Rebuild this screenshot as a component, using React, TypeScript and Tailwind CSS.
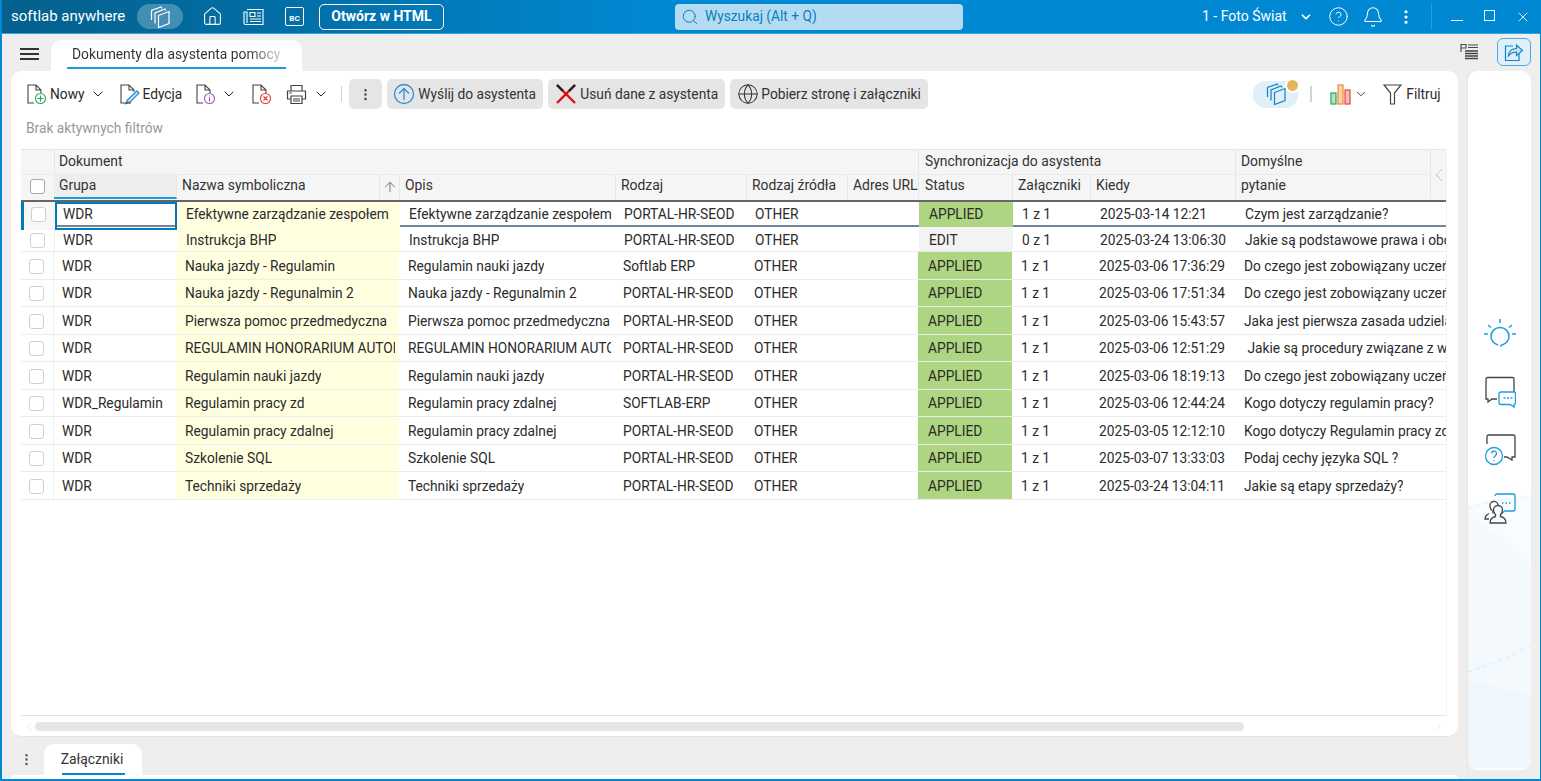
import React from "react";
import {
  ArrowUp,
  Bell,
  ChevronDown,
  ChevronLeft,
  ChevronRight,
  CircleHelp,
  EllipsisVertical,
  Globe,
  House,
  Search,
  X,
} from "lucide-react";

const gridCols =
  "grid grid-cols-[34px_122px_223px_216px_131px_101px_71px_94px_78px_145px_211px]";

type Row = {
  group: string;
  name: string;
  desc: string;
  kind: string;
  status: string;
  att: string;
  when: string;
  question: string;
};

const rows: Row[] = [
  { group: "WDR", name: "Instrukcja BHP", desc: "Instrukcja BHP", kind: "PORTAL-HR-SEOD", status: "EDIT", att: "0 z 1", when: "2025-03-24 13:06:30", question: "Jakie są podstawowe prawa i obowiązki" },
  { group: "WDR", name: "Nauka jazdy - Regulamin", desc: "Regulamin nauki jazdy", kind: "Softlab ERP", status: "APPLIED", att: "1 z 1", when: "2025-03-06 17:36:29", question: "Do czego jest zobowiązany uczeń kierowcy" },
  { group: "WDR", name: "Nauka jazdy - Regunalmin 2", desc: "Nauka jazdy - Regunalmin 2", kind: "PORTAL-HR-SEOD", status: "APPLIED", att: "1 z 1", when: "2025-03-06 17:51:34", question: "Do czego jest zobowiązany uczeń kierowcy" },
  { group: "WDR", name: "Pierwsza pomoc przedmedyczna", desc: "Pierwsza pomoc przedmedyczna", kind: "PORTAL-HR-SEOD", status: "APPLIED", att: "1 z 1", when: "2025-03-06 15:43:57", question: "Jaka jest pierwsza zasada udzielania" },
  { group: "WDR", name: "REGULAMIN HONORARIUM AUTORSKIEGO", desc: "REGULAMIN HONORARIUM AUTORSKIEGO", kind: "PORTAL-HR-SEOD", status: "APPLIED", att: "1 z 1", when: "2025-03-06 12:51:29", question: "\u00a0Jakie są procedury związane z wypłatą" },
  { group: "WDR", name: "Regulamin nauki jazdy", desc: "Regulamin nauki jazdy", kind: "PORTAL-HR-SEOD", status: "APPLIED", att: "1 z 1", when: "2025-03-06 18:19:13", question: "Do czego jest zobowiązany uczeń kierowcy" },
  { group: "WDR_Regulamin", name: "Regulamin pracy zd", desc: "Regulamin pracy zdalnej", kind: "SOFTLAB-ERP", status: "APPLIED", att: "1 z 1", when: "2025-03-06 12:44:24", question: "Kogo dotyczy regulamin pracy?" },
  { group: "WDR", name: "Regulamin pracy zdalnej", desc: "Regulamin pracy zdalnej", kind: "PORTAL-HR-SEOD", status: "APPLIED", att: "1 z 1", when: "2025-03-05 12:12:10", question: "Kogo dotyczy Regulamin pracy zdalnej" },
  { group: "WDR", name: "Szkolenie SQL", desc: "Szkolenie SQL", kind: "PORTAL-HR-SEOD", status: "APPLIED", att: "1 z 1", when: "2025-03-07 13:33:03", question: "Podaj cechy języka SQL ?" },
  { group: "WDR", name: "Techniki sprzedaży", desc: "Techniki sprzedaży", kind: "PORTAL-HR-SEOD", status: "APPLIED", att: "1 z 1", when: "2025-03-24 13:04:11", question: "Jakie są etapy sprzedaży?" },
];

// Page outline with a coloured round badge in the corner
const DocIcon = ({ badge, children }: { badge: string; children?: React.ReactNode }) => (
  <svg width="21" height="22" viewBox="0 0 21 22" fill="none">
    <path d="M8 20H2V2h8l5 5v3M10 2v5h5" stroke="#444" strokeWidth="1.1" />
    <circle cx="14.5" cy="15.5" r="5" stroke={badge} strokeWidth="1.1" fill="#fff" />
    {children}
  </svg>
);

const EditIcon = () => (
  <svg width="21" height="22" viewBox="0 0 21 22" fill="none">
    <path d="M6 20H2V2h8l5 5v2M10 2v5h5" stroke="#444" strokeWidth="1.1" />
    <path d="M18 8l2 2-9 9-4 1.5L8.500 17z" stroke="#2f8fd6" strokeWidth="1.400" fill="#d6ebfa" />
    <path d="M6 20h6" stroke="#444" strokeWidth="1.1" />
  </svg>
);

const PrinterIcon = () => (
  <svg width="21" height="21" viewBox="0 0 21 21" fill="none" stroke="#444" strokeWidth="1.2">
    <path d="M5 7V1.500h11V7" />
    <path d="M5 15H1.500V7h18v8H16" />
    <path d="M5 12h11v7.500H5zM7 15h7M7 17h7" />
    <path d="M3 9h3" stroke="#2f8fd6" />
  </svg>
);

// Three fanned out pages, only the front one is complete
const SyncIcon = ({ color }: { color: string }) => (
  <svg width="22" height="22" viewBox="0 0 22 22" fill="none" stroke={color} strokeWidth="1.200">
    <path d="M9.500 9.500l10.500-4v12l-10.500 4z" />
    <path d="M6 17.500V7L16 3l1 1.500" />
    <path d="M2.500 14V4.500L12 1l1 1.500" />
  </svg>
);

const NewsIcon = () => (
  <svg width="21" height="18" viewBox="0 0 21 18" fill="none" stroke="#fff" strokeWidth="1.100">
    <path d="M4 1.500h16v15H2.500A1.500 1.500 0 0 1 1 15V4h3v11" />
    <path d="M7 4.500h5v4H7zM14 5h4M14 8h4M7 11h11M7 13.500h11" />
  </svg>
);

const SendIcon = () => (
  <svg width="22" height="22" viewBox="0 0 22 22" fill="none" stroke="#2f8fd6" strokeWidth="1.300">
    <circle cx="11" cy="11" r="9.500" />
    <path d="M11 17V5.500M6 10.500l5-5 5 5" />
  </svg>
);

const CrossIcon = () => (
  <svg width="22" height="22" viewBox="0 0 22 22" fill="none" strokeWidth="2.400">
    <path d="M2 2l18 18" stroke="#d31212" />
    <path d="M20 2L2 20" stroke="#e00f0f" />
    <path d="M2 2l6 6M20 2l-6 6" stroke="#222" />
  </svg>
);

const ChartIcon = () => (
  <svg width="21" height="21" viewBox="0 0 21 21" fill="none" strokeWidth="1.200">
    <rect x="1" y="9" width="5" height="11" stroke="#25a65a" fill="#b7e2c6" />
    <rect x="8" y="1" width="5" height="19" stroke="#ee8a2c" fill="#fbd3ad" />
    <rect x="15" y="6" width="5" height="14" stroke="#e6443f" fill="#f8bcb9" />
  </svg>
);

const FilterIcon = () => (
  <svg width="19" height="21" viewBox="0 0 19 21" fill="none" stroke="#444" strokeWidth="1.200">
    <path d="M1 1h17l-6.500 8v11h-4V9z" />
  </svg>
);

const FlagListIcon = () => (
  <svg width="19" height="18" viewBox="0 0 19 18" fill="none" stroke="#444" strokeWidth="1.100">
    <path d="M1 1v8M1 1.500h5v3.500H1M8 2h10M8 4.500h10" />
    <path d="M5 8h13M5 10.500h13M5 13h13M5 15.500h13" strokeWidth="1.300" />
  </svg>
);

const ShareIcon = () => (
  <svg width="20" height="20" viewBox="0 0 20 20" fill="none" stroke="#1183c4" strokeWidth="1.200">
    <path d="M9 4H1.500v14.500H15V12" />
    <path d="M4.500 14c.5-5 4-7.500 8-7.500V3l6 5.500-6 5v-3.500c-3.500 0-6 1.500-8 4z" fill="#cfe6f5" />
  </svg>
);

const BulbIcon = () => (
  <svg width="32" height="32" viewBox="0 0 32 32" fill="none" stroke="#1c9be0" strokeWidth="1.500">
    <path d="M14 27c-4-1.500-7-4-7-8.500a9 9 0 0 1 18 0c0 4.500-3 7-7 8.500l-2 1.500" />
    <path d="M16 1v4M4 7l3 2.500M28 7l-3 2.500M0 16h4M28 16h4" />
  </svg>
);

const ChatIcon = () => (
  <svg width="32" height="32" viewBox="0 0 32 32" fill="none" strokeWidth="1.300">
    <path d="M13 23H8l-4 3v-3H2V3a1.500 1.500 0 0 1 1.500-1.500h25A1.500 1.500 0 0 1 30 3v13" stroke="#444" />
    <path d="M15 18a2 2 0 0 1 2-2h13a1.500 1.500 0 0 1 1.500 1.500V27a1.500 1.500 0 0 1-1.500 1.500v2.500l-4-2.500h-9a2 2 0 0 1-2-2z" stroke="#1c9be0" fill="#fff" />
    <path d="M19.500 22h2M23 22h2M26.500 22h2" stroke="#1c9be0" />
  </svg>
);

const HelpChatIcon = () => (
  <svg width="32" height="32" viewBox="0 0 32 32" fill="none" strokeWidth="1.300">
    <path d="M3 10V2.500A1.500 1.500 0 0 1 4.500 1h25A1.500 1.500 0 0 1 31 2.500V23h-3v3l-5-3h-3" stroke="#444" />
    <circle cx="10" cy="22" r="8.500" stroke="#1c9be0" fill="#fff" />
    <path d="M7.500 19.500a2.500 2.500 0 1 1 4 2c-1 .8-1.500 1.300-1.500 2.500M10 26v1" stroke="#1c9be0" />
  </svg>
);

const UsersChatIcon = () => (
  <svg width="32" height="32" viewBox="0 0 32 32" fill="none" strokeWidth="1.300">
    <path d="M11 4a2 2 0 0 1 2-2h16a2 2 0 0 1 2 2v13a2 2 0 0 1-2 2h-8l-4 3v-3" stroke="#1c9be0" />
    <path d="M18 11h1.500M21.500 11h1.500M25 11h1.500" stroke="#1c9be0" />
    <path d="M9 21.500V19c-2-1-3-3-3-5a4 4 0 0 1 8-1M5 27H1c0-3.500 2-4.500 4-5.500" stroke="#444" />
    <path d="M6 31c0-4 1.500-5.500 5.500-6.500v-2c-1.500-1-2-3-2-4.500a4.500 4.500 0 0 1 9 0c0 1.500-.5 3.500-2 4.500v2c4 1 5.500 2.500 5.500 6.500z" stroke="#444" fill="#f8fbfd" />
  </svg>
);

const Checkbox = () => (
  <span className="block h-[15px] w-[15px] rounded-[3px] border border-[#d0d0d0] bg-white" />
);

const ToolButton = ({ icon, label, className }: { icon: React.ReactNode; label: string; className: string }) => (
  <button className={`flex h-[30px] items-center rounded-[5px] bg-[#e5e5e5] text-[13.75px] text-[#333] ${className}`}>
    {icon}
    <span>{label}</span>
  </button>
);

const HeadCell = ({ className, children }: { className?: string; children: React.ReactNode }) => (
  <div className={`flex items-center overflow-hidden whitespace-nowrap border-r border-[#e6e6e6] text-[13.9px] text-[#333] ${className ?? "pl-[5px] pb-[4px]"}`}>
    {children}
  </div>
);

const BodyCell = ({ className, flush, children }: { className: string; flush?: boolean; children: React.ReactNode }) => (
  <div className={`flex items-center ${flush ? "" : "pr-[4px]"} ${className}`}>
    <span className="block overflow-hidden whitespace-nowrap">{children}</span>
  </div>
);

const DataRow = ({ row, shifted }: { row: Row; shifted: boolean }) => (
  <div className={`${gridCols} border-b border-[#ececec] text-[13.75px] text-[#2b2b2b] ${shifted ? "-ml-px h-[27.5px]" : "h-[25px]"}`}>
    <div className="flex items-center justify-center border-r border-[#efefef] pt-[2px]">
      <Checkbox />
    </div>
    <BodyCell className="pl-[8px] pt-[2px]">{row.group}</BodyCell>
    <BodyCell className="bg-[#ffffe0] pl-[9px] pt-[2px]">{row.name}</BodyCell>
    <BodyCell className="pl-[9px] pt-[2px]">{row.desc}</BodyCell>
    <BodyCell className="pl-[8px] pt-[2px]">{row.kind}</BodyCell>
    <BodyCell className="pl-[8px] pt-[2px]">OTHER</BodyCell>
    <div />
    <BodyCell className={`pl-[10px] pt-[2px] ${row.status === "APPLIED" ? "bg-[#aed581]" : "bg-[#f3f3f3]"}`}>{row.status}</BodyCell>
    <BodyCell className="pl-[9px] pt-[2px]">{row.att}</BodyCell>
    <BodyCell className="pl-[9px] pt-[2px]">{row.when}</BodyCell>
    <BodyCell flush className="pl-[9px] pt-[2px]">{row.question}</BodyCell>
  </div>
);

export default function App() {
  return (
    <div className="flex h-[781px] w-[1541px] flex-col overflow-hidden border-l-2 border-r border-b-2 border-[#0088d2] bg-[#eeeeee] font-['Roboto',sans-serif]">
      {/* Title bar */}
      <header className="-ml-[2px] -mr-px flex h-[34px] shrink-0 items-center border-b border-[#33a4e0] bg-[linear-gradient(90deg,#04608c_0%,#0272ac_22%,#0088d2_42%)] pl-[11px] text-white">
        <span className="w-[126px] text-[15px]">softlab anywhere</span>
        <div className="flex h-[25px] w-[46px] items-center justify-center rounded-full bg-white/25">
          <SyncIcon color="#fff" />
        </div>
        <House className="ml-[19px]" size={21} strokeWidth={1.2} />
        <div className="ml-[20px]"><NewsIcon /></div>
        <div className="ml-[21px] flex h-[19px] w-[19px] items-end justify-center rounded-[2px] border border-white text-[8px] font-bold leading-[13px]">BC</div>
        <button className="ml-[15px] h-[26px] w-[125px] rounded-[5px] border border-white text-[14px] font-bold">Otwórz w HTML</button>
        <div className="ml-[231px] flex h-[26px] w-[288px] items-center gap-[6px] rounded-[4px] bg-[#b3dcf3] pl-[6px] text-[13.75px] text-[#0a7ebd]">
          <Search size={18} strokeWidth={1.3} />
          <span>Wyszukaj (Alt + Q)</span>
        </div>
        <span className="ml-[239px] text-[14px]">1 - Foto Świat</span>
        <ChevronDown className="ml-[12px]" size={14} strokeWidth={3} />
        <CircleHelp className="ml-[15px]" size={21} strokeWidth={1.1} />
        <Bell className="ml-[13px]" size={22} strokeWidth={1.1} />
        <EllipsisVertical className="ml-[13px]" size={18} strokeWidth={2.2} />
        <span className="ml-[16px] h-[26px] w-px bg-[#2a9ddb]" />
        <span className="ml-[19px] mt-[7px] h-px w-[12px] bg-white" />
        <span className="ml-[21px] mb-[3px] h-[11px] w-[11px] border border-white" />
        <X className="ml-[20px]" size={16} strokeWidth={1.3} />
      </header>

      {/* Tab strip */}
      <div className="flex h-[37px] shrink-0 items-end pl-[18px] pr-[9px]">
        <div className="mb-[11px] flex w-[19px] flex-col gap-[3px]">
          <span className="h-[2px] bg-[#333]" />
          <span className="h-[2px] bg-[#333]" />
          <span className="h-[2px] bg-[#333]" />
        </div>
        <div className="ml-[12px] flex h-[31px] w-[251px] flex-col rounded-t-[10px] bg-white px-[16px]">
          <div className="flex-1 pl-[5px] pt-[6px] text-[13.85px] leading-[17px]">
            <span className="bg-[linear-gradient(90deg,#333_84%,#c8c8c8_100%)] bg-clip-text text-transparent">Dokumenty dla asystenta pomocy</span>
          </div>
          <span className="mb-[2px] h-[2px] bg-[#1c9be0]" />
        </div>
        <div className="mb-[5px] ml-auto flex items-center gap-[18px]">
          <FlagListIcon />
          <div className="flex h-[28px] w-[34px] items-center justify-center rounded-[6px] border border-[#55a9da] bg-[#dff0fa]">
            <ShareIcon />
          </div>
        </div>
      </div>

      <div className="flex min-h-0 flex-1 pl-[9px]">
        <div className="flex min-w-0 flex-1 flex-col">
          {/* Main card */}
          <main className="flex h-[666px] w-[1447px] flex-col rounded-[10px] border-b border-[#e4e4e4] bg-white">
            <div className="flex h-[38px] shrink-0 items-end pl-[15px]">
              <div className="flex h-[30px] flex-1 items-center text-[13.75px] text-[#2b2b2b]">
                <DocIcon badge="#22a94f">
                  <path d="M14.500 12.500v6M11.500 15.500h6" stroke="#22a94f" strokeWidth="1.100" />
                </DocIcon>
                <span className="ml-[3px]">Nowy</span>
                <ChevronDown className="ml-[5px]" size={16} strokeWidth={1.5} color="#222" />
                <div className="ml-[13px]"><EditIcon /></div>
                <span className="ml-[3px]">Edycja</span>
                <div className="ml-[13px]">
                  <DocIcon badge="#a054b8">
                    <path d="M14.500 14.500v4M14.500 12.500v1" stroke="#a054b8" strokeWidth="1.100" />
                  </DocIcon>
                </div>
                <ChevronDown className="ml-[5px]" size={16} strokeWidth={1.5} color="#222" />
                <div className="ml-[14px]">
                  <DocIcon badge="#e23b3b">
                    <path d="M12.500 13.500l4 4M16.500 13.500l-4 4" stroke="#e23b3b" strokeWidth="1.100" />
                  </DocIcon>
                </div>
                <div className="ml-[14px]"><PrinterIcon /></div>
                <ChevronDown className="ml-[6px]" size={16} strokeWidth={1.5} color="#222" />
                <span className="ml-[12px] h-[16px] w-px bg-[#d4d4d4]" />
                <div className="ml-[7px] flex h-[30px] w-[33px] items-center justify-center rounded-[5px] bg-[#e5e5e5]">
                  <EllipsisVertical size={15} strokeWidth={2} color="#444" />
                </div>
                <ToolButton className="ml-[5px] w-[156px] gap-[3px] pl-[6px]" icon={<SendIcon />} label="Wyślij do asystenta" />
                <ToolButton className="ml-[5px] w-[177px] gap-[3px] pl-[7px]" icon={<CrossIcon />} label="Usuń dane z asystenta" />
                <ToolButton className="ml-[5px] w-[198px] gap-[2px] pl-[7px]" icon={<Globe size={22} strokeWidth={1.1} color="#333" />} label="Pobierz stronę i załączniki" />
                <div className="relative ml-[325px] flex h-[27px] w-[45px] items-center justify-center rounded-[13px] bg-[#e0f0f9]">
                  <SyncIcon color="#1183c4" />
                  <span className="absolute -right-[2px] -top-[3px] box-content h-[11px] w-[11px] rounded-full border-2 border-white bg-[#e2b65f]" />
                </div>
                <span className="ml-[12px] h-[16px] w-[2px] bg-[#d4d4d4]" />
                <div className="ml-[18px]"><ChartIcon /></div>
                <ChevronDown className="ml-[3px]" size={14} strokeWidth={1.5} color="#222" />
                <div className="ml-[15px]"><FilterIcon /></div>
                <span className="ml-[4px]">Filtruj</span>
              </div>
            </div>
            <div className="flex h-[40px] shrink-0 items-center pb-[2px] pl-[15px] text-[13.75px] text-[#999]">Brak aktywnych filtrów</div>

            {/* Table */}
            <div className="ml-[10px] flex min-h-0 w-[1426px] flex-1 flex-col overflow-hidden border-r border-[#f2f2f2]">
              <div className="relative h-[51px] shrink-0 border-t border-[#e6e6e6] bg-[#f5f5f5]">
                <div className={`${gridCols} h-[25px] border-b border-[#ebebeb]`}>
                  <div className="border-r border-[#e6e6e6]" />
                  <HeadCell className="col-span-6 pl-[4px] pb-[2px]">Dokument</HeadCell>
                  <HeadCell className="col-span-3 pl-[6px] pb-[2px]">Synchronizacja do asystenta</HeadCell>
                  <HeadCell className="border-r-0 pl-[5px] pb-[2px]">Domyślne</HeadCell>
                </div>
                <div className={`${gridCols} h-[24px]`}>
                  <div className="flex items-center justify-center border-r border-[#e6e6e6]">
                    <span className="-mt-[1px] block h-[15px] w-[15px] rounded-[3px] border border-[#a8a8a8] bg-white" />
                  </div>
                  <HeadCell className="-ml-px border-b-2 border-b-[#1c9be0] bg-[#eeeeee] pl-[5px] pb-[1px]">Grupa</HeadCell>
                  <HeadCell className="justify-between pl-[5px]">
                    <span className="mb-[4px]">Nazwa symboliczna</span>
                    <span className="flex h-full w-[20px] items-center justify-center border-l border-[#e6e6e6]">
                      <ArrowUp size={16} strokeWidth={1.3} color="#666" />
                    </span>
                  </HeadCell>
                  <HeadCell>Opis</HeadCell>
                  <HeadCell>Rodzaj</HeadCell>
                  <HeadCell>Rodzaj źródła</HeadCell>
                  <HeadCell>Adres URL</HeadCell>
                  <HeadCell className="pl-[6px] pb-[4px]">Status</HeadCell>
                  <HeadCell>Załączniki</HeadCell>
                  <HeadCell>Kiedy</HeadCell>
                  <HeadCell className="border-r-0 pl-[5px] pb-[4px]">pytanie</HeadCell>
                </div>
                {/* scroll back button over the header */}
                <div className="absolute right-0 top-0 flex h-[49px] w-[16px] items-center justify-center border-l border-[#e6e6e6] bg-[#f5f5f5]">
                  <ChevronLeft className="shrink-0" size={22} strokeWidth={1} color="#bbb" />
                </div>
              </div>

              {/* Selected row */}
              <div className={`${gridCols} h-[27px] shrink-0 border-y-2 border-t-[#666] border-b-[#71869a] text-[13.75px] text-[#2b2b2b]`}>
                <div className="flex items-center justify-center border-l-[3px] border-l-[#0579b5] bg-[#f7f7f7] pb-[3px] pr-[2px]">
                  <Checkbox />
                </div>
                <div className="flex items-center border-2 border-[#0579b5] pb-[3px] pl-[6px]">WDR</div>
                <BodyCell className="bg-[#ffffe0] pb-[3px] pl-[9px]">Efektywne zarządzanie zespołem</BodyCell>
                <BodyCell className="pb-[3px] pl-[9px]">Efektywne zarządzanie zespołem</BodyCell>
                <BodyCell className="pb-[3px] pl-[8px]">PORTAL-HR-SEOD</BodyCell>
                <BodyCell className="pb-[3px] pl-[8px]">OTHER</BodyCell>
                <div />
                <BodyCell className="bg-[#aed581] pb-[3px] pl-[10px]">APPLIED</BodyCell>
                <BodyCell className="pb-[3px] pl-[9px]">1 z 1</BodyCell>
                <BodyCell className="pb-[3px] pl-[9px]">2025-03-14 12:21</BodyCell>
                <BodyCell flush className="pb-[3px] pl-[9px]">Czym jest zarządzanie?</BodyCell>
              </div>

              {rows.map((row, i) => (
                <DataRow key={row.name + i} row={row} shifted={i > 0} />
              ))}
              <div className="flex-1" />
            </div>

            {/* Horizontal scrollbar */}
            <div className="ml-[10px] flex h-[21px] w-[1426px] shrink-0 items-center border-t border-[#e4e4e4] pl-[2px] pr-[2px]">
              <ChevronLeft size={13} strokeWidth={1.2} color="#ddd" />
              <div className="ml-[-1px] h-[9px] w-[1209px] rounded-full bg-[#e5e5e5]" />
              <ChevronRight className="ml-auto" size={13} strokeWidth={1.2} color="#ddd" />
            </div>
          </main>

          {/* Bottom tabs */}
          <div className="mt-[7px] flex h-[31px] shrink-0 items-center">
            <EllipsisVertical className="ml-[8px]" size={15} strokeWidth={2} color="#555" />
            <div className="ml-[10px] flex h-[31px] w-[98px] flex-col items-center rounded-t-[10px] bg-white">
              <span className="flex-1 pr-[2px] pt-[6px] text-[13.85px] leading-[18px] text-[#333]">Załączniki</span>
              <span className="h-[2px] w-[63px] bg-[#0088d2]" />
            </div>
          </div>
          <div className="h-[4px] w-[1447px] rounded-t-[6px] bg-white" />
        </div>

        {/* Right panel */}
        <div className="ml-[8px] mr-[9px] flex h-full w-[64px] shrink-0 border-l border-[#e6e6e6]">
          <aside className="relative mb-[9px] flex w-[63px] flex-col items-center gap-[26px] overflow-hidden rounded-[10px] bg-white pt-[247px]">
            {/* background wave behind the icons */}
            <svg className="absolute left-0 top-[420px]" width="63" height="277" viewBox="0 0 63 277" fill="none">
              <path d="M0 14Q30 5 63 4V277H0z" fill="#f9fcfe" />
              <path d="M0 25Q30 40 63 76V277H0z" fill="#f4f9fd" />
              <path d="M0 190Q30 196 63 205V277H0z" fill="#eff6fc" />
              <path d="M0 17C20 10 44 6 63 7" stroke="#e3f1fb" strokeDasharray="4 4" />
              <path d="M0 181C22 175 44 165 63 154" stroke="#d3eafa" strokeDasharray="4 4" />
            </svg>
            <div className="relative"><BulbIcon /></div>
            <div className="relative"><ChatIcon /></div>
            <div className="relative"><HelpChatIcon /></div>
            <div className="relative"><UsersChatIcon /></div>
          </aside>
        </div>
      </div>
    </div>
  );
}
